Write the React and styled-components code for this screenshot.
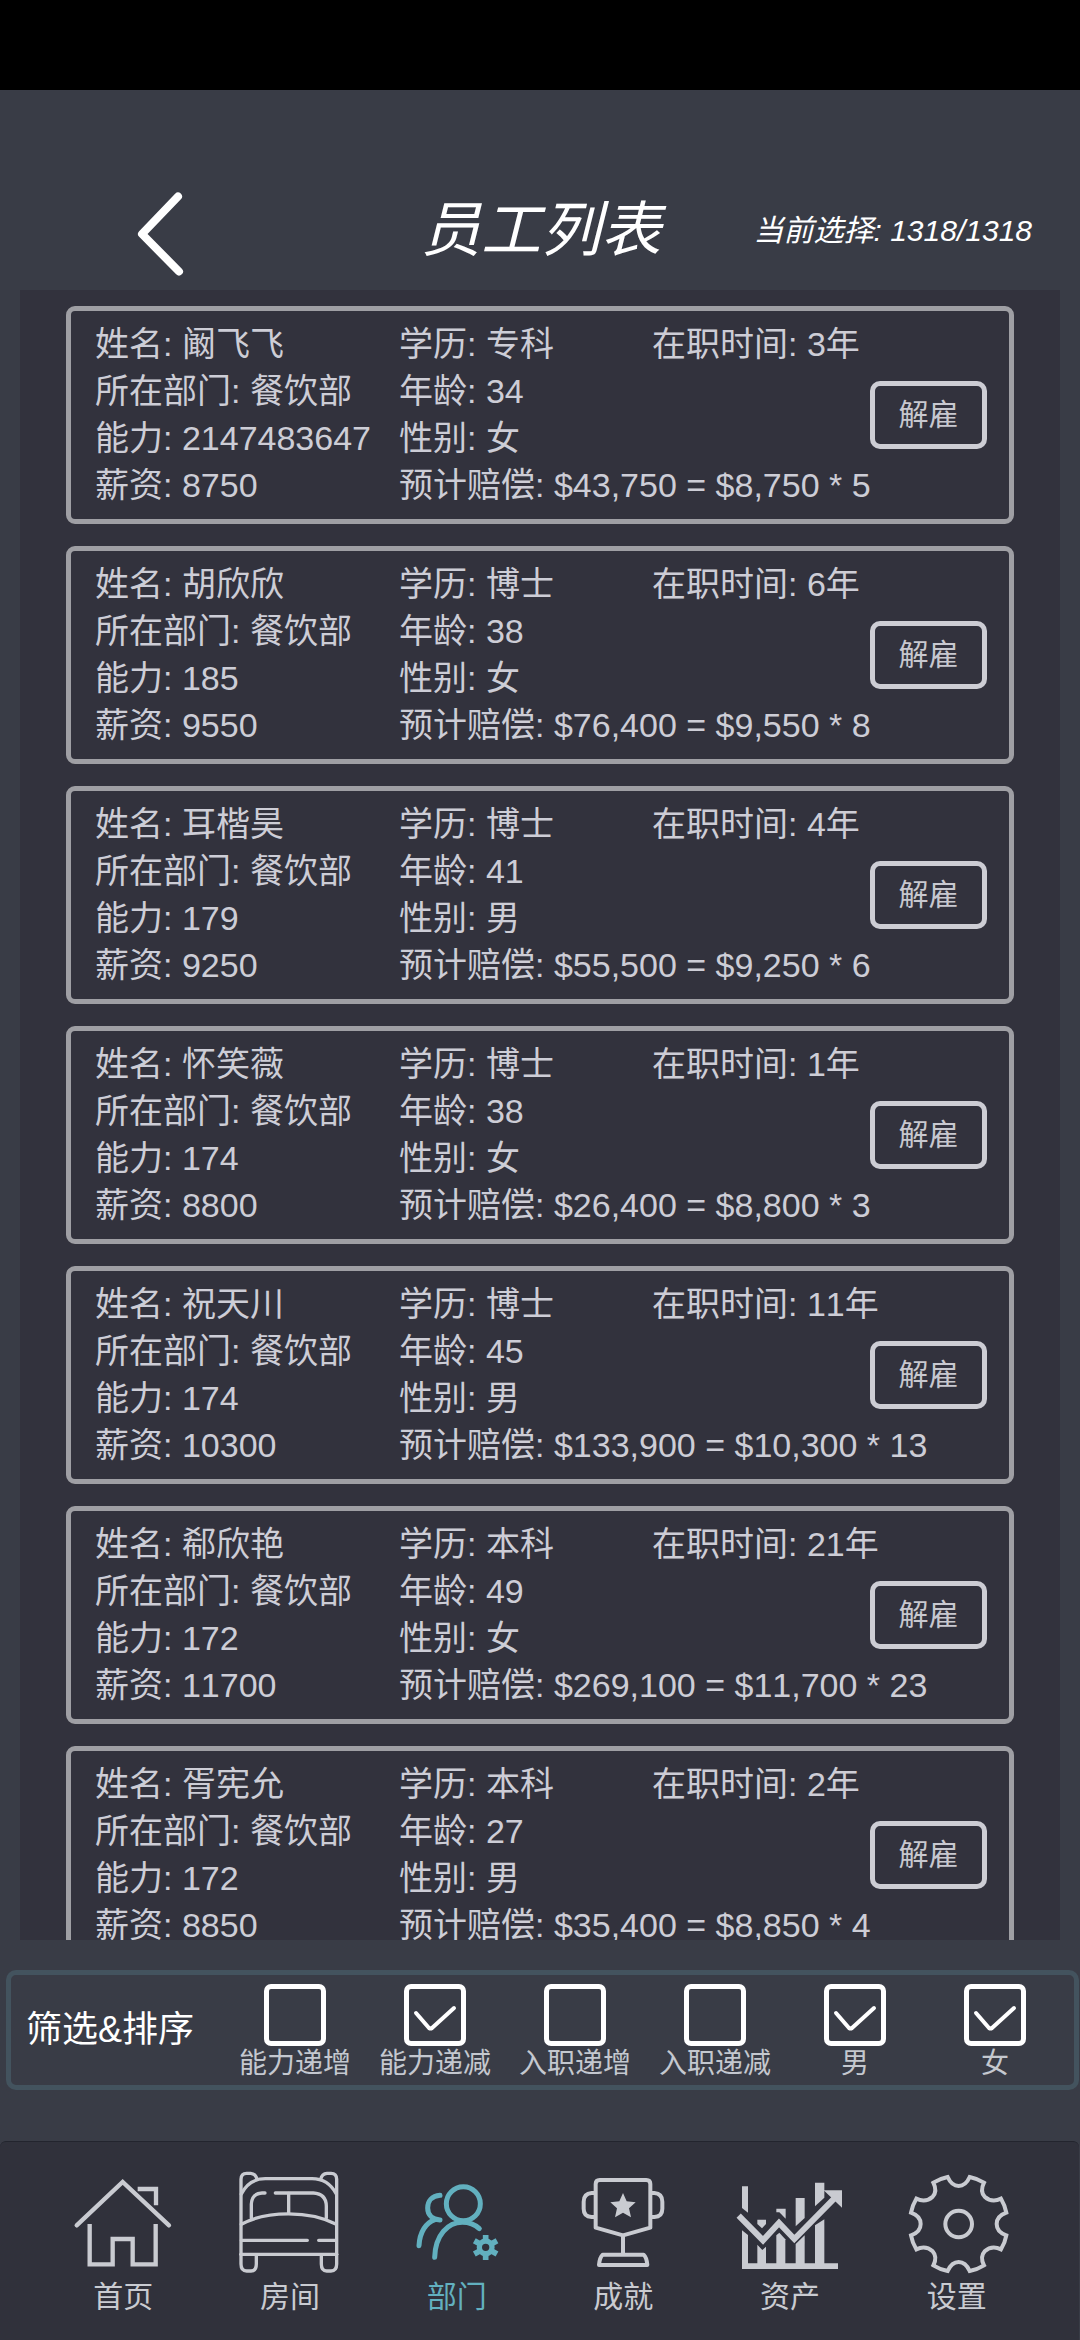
import React, { useState } from "react";
import styled, { createGlobalStyle } from "styled-components";

const GlobalStyle = createGlobalStyle`
  * {
    box-sizing: border-box;
  }
  body {
    margin: 0;
    background: #393c46;
    font-family: "Liberation Sans", "Noto Sans CJK SC", sans-serif;
    font-kerning: none;
  }
  button, input {
    font-family: inherit;
    margin: 0;
  }
`;

const Page = styled.div`
  display: flex;
  flex-direction: column;
  height: 100vh;
  background: #393c46;
`;

const StatusBar = styled.div`
  flex: none;
  height: 90px;
  background: #000;
`;

const Header = styled.header`
  flex: none;
  display: grid;
  grid-template-columns: 1fr auto 1fr;
  align-items: center;
  height: 200px;
  padding: 82px 48px 0 136px;
  color: #fff;
  font-style: italic;
`;

const BackButton = styled.button`
  justify-self: start;
  display: flex;
  padding: 6px 0 0;
  border: none;
  background: none;
  color: #fff;
  cursor: pointer;
`;

const Title = styled.h1`
  margin: 0 86px 0 0;
  font-size: 60px;
  line-height: 80px;
  font-weight: 400;
`;

const Selected = styled.span`
  justify-self: end;
  font-size: 30px;
  line-height: 40px;
  white-space: nowrap;
`;

const List = styled.ul`
  flex: 1;
  min-height: 0;
  display: flex;
  flex-direction: column;
  gap: 22px;
  margin: 0 20px;
  padding: 16px 46px 0;
  overflow: hidden;
  list-style: none;
  background: #32323d;
`;

const Card = styled.li`
  flex: none;
  display: grid;
  grid-template-columns: 304fr 253fr 335fr;
  grid-auto-rows: 47px;
  align-items: center;
  padding: 10px 22px 10px 24px;
  border: 5px solid #9f9fa4;
  border-radius: 9px;
  color: #cdcdd6;
  font-size: 34px;
  line-height: 47px;
  white-space: nowrap;
`;

const Field = styled.span`
  grid-column: ${({ $col }) => $col};
  grid-row: ${({ $row }) => $row};
`;

const FireButton = styled.button`
  grid-column: 3;
  grid-row: 2 / span 2;
  justify-self: end;
  width: 117px;
  height: 68px;
  padding: 0 0 6px;
  border: 5px solid #cdcdd4;
  border-radius: 10px;
  background: none;
  color: #c8c8cf;
  font-size: 30px;
  cursor: pointer;
`;

const FilterBar = styled.section`
  flex: none;
  display: flex;
  align-items: center;
  margin: 30px 1px 51px 6px;
  padding: 9px 9px 3px 15px;
  border: 5px solid #43535e;
  border-radius: 10px;
`;

const FilterTitle = styled.span`
  flex: none;
  width: 199px;
  padding-bottom: 6px;
  color: #fff;
  font-size: 36px;
  line-height: 48px;
`;

const Options = styled.div`
  flex: 1;
  display: grid;
  grid-template-columns: repeat(6, 1fr);
`;

const Option = styled.label`
  display: flex;
  flex-direction: column;
  align-items: center;
  color: #c4c8cf;
  font-size: 28px;
  line-height: 36px;
  white-space: nowrap;
  cursor: pointer;
`;

const CheckWrap = styled.span`
  display: grid;

  > * {
    grid-area: 1 / 1;
  }
`;

const CheckInput = styled.input`
  appearance: none;
  width: 62px;
  height: 62px;
  border: 5px solid #fff;
  border-radius: 7px;
`;

const CheckMark = styled.svg`
  width: 62px;
  height: 62px;
  pointer-events: none;
`;

const Nav = styled.nav`
  flex: none;
  display: grid;
  grid-template-columns: repeat(6, 1fr);
  margin-right: 1px;
  padding: 30px 39px 22px 40px;
  border-top: 1px solid #23252e;
  border-radius: 6px 6px 0 0;
  background: #30313b;
`;

const NavItem = styled.a`
  display: flex;
  flex-direction: column;
  align-items: center;
  gap: 4px;
  color: ${({ $active }) => ($active ? "#62b0bf" : "#c9cbd1")};
  font-size: 30px;
  line-height: 42px;
  text-decoration: none;
`;

const NavIcon = styled.svg`
  width: 100px;
  height: 100px;
  overflow: visible;
  fill: none;
  stroke: currentColor;
`;

const employees = [
  { name: "阚飞飞", dept: "餐饮部", ability: 2147483647, salary: 8750, degree: "专科", age: 34, sex: "女", years: 3, factor: 5 },
  { name: "胡欣欣", dept: "餐饮部", ability: 185, salary: 9550, degree: "博士", age: 38, sex: "女", years: 6, factor: 8 },
  { name: "耳楷昊", dept: "餐饮部", ability: 179, salary: 9250, degree: "博士", age: 41, sex: "男", years: 4, factor: 6 },
  { name: "怀笑薇", dept: "餐饮部", ability: 174, salary: 8800, degree: "博士", age: 38, sex: "女", years: 1, factor: 3 },
  { name: "祝天川", dept: "餐饮部", ability: 174, salary: 10300, degree: "博士", age: 45, sex: "男", years: 11, factor: 13 },
  { name: "郗欣艳", dept: "餐饮部", ability: 172, salary: 11700, degree: "本科", age: 49, sex: "女", years: 21, factor: 23 },
  { name: "胥宪允", dept: "餐饮部", ability: 172, salary: 8850, degree: "本科", age: 27, sex: "男", years: 2, factor: 4 },
];

const filters = [
  { id: "abilityAsc", label: "能力递增", on: false },
  { id: "abilityDesc", label: "能力递减", on: true },
  { id: "joinedAsc", label: "入职递增", on: false },
  { id: "joinedDesc", label: "入职递减", on: false },
  { id: "male", label: "男", on: true },
  { id: "female", label: "女", on: true },
];

const money = (n) => "$" + n.toLocaleString("en-US");

const HomeIcon = () => (
  <NavIcon viewBox="100 156 300 300" strokeWidth="13">
    <path strokeLinecap="round" d="M111 316 L249 186 L388 316" />
    <path d="M294 207 H349 V256" />
    <path d="M150 312 V433 H219 V357 H279 V433 H348 V312" />
  </NavIcon>
);

const BedIcon = () => (
  <NavIcon viewBox="600 156 300 300" strokeWidth="10" strokeLinecap="round" strokeLinejoin="round">
    <path d="M603 403 V178 Q603 160 620 160 H632 Q647 161 651 178" />
    <path d="M890 403 V178 Q890 160 873 160 H861 Q846 161 842 178" />
    <path d="M604 222 C620 190 645 176 676 176 H816 C848 176 873 192 889 222" />
    <path d="M634 294 V252 Q636 220 666 219 H675" />
    <path d="M706 219 H820 Q858 221 859 258 V294" />
    <path d="M746 220 V280" />
    <path d="M604 313 C680 271 810 271 889 313" />
    <path d="M604 361 H802 M836 361 H889" />
    <path d="M603 403 H890" />
    <path d="M603 403 V432 Q603 453 620 453 H633 Q649 453 649 432 V404" />
    <path d="M890 403 V432 Q890 453 873 453 H860 Q844 453 844 432 V404" />
  </NavIcon>
);

const TeamIcon = () => (
  <NavIcon viewBox="80 156 300 300" strokeWidth="15" strokeLinecap="round">
    <circle cx="249" cy="251" r="51" />
    <path d="M163 412 C165 345 203 307 246 307 C267 307 284 314 297 326" />
    <path d="M179 226 C154 228 142 244 142 264 C142 284 155 298 179 300" />
    <path d="M116 377 C118 336 137 308 164 299" />
    <circle cx="316" cy="382" r="19" strokeWidth="16" />
    <path
      strokeLinecap="butt"
      strokeWidth="17"
      d="M316 360 V345 M316 404 V420 M334 371 L350 362 M298 393 L282 402 M334 393 L350 402 M298 371 L282 362"
    />
  </NavIcon>
);

const TrophyIcon = () => (
  <NavIcon viewBox="580 156 300 300" strokeWidth="12" strokeLinejoin="round">
    <path d="M648 323 V192 Q648 180 660 180 H800 Q812 180 812 192 V323 L730 346 Z" />
    <path d="M648 219 H636 Q612 221 612 245 V266 Q612 290 636 291 H648" />
    <path d="M812 219 H824 Q848 221 848 245 V266 Q848 290 824 291 H812" />
    <path d="M730 346 V402" />
    <path d="M669 404 H792 Q801 412 803 435 H658 Q660 412 669 404 Z" />
    <path
      fill="currentColor"
      stroke="none"
      d="M730 219 L741 244 L768 247 L748 265 L754 292 L730 278 L706 292 L712 265 L692 247 L719 244 Z"
    />
  </NavIcon>
);

const AssetsIcon = () => (
  <NavIcon viewBox="120 156 300 300" strokeWidth="18">
    <g fill="currentColor" stroke="none">
      <path d="M126 199 H144 V278 L126 264 Z" />
      <path d="M126 331 L144 345 V430 H414 V447 H126 Z" />
      <path d="M172 299 H198 V312 L186 325 L172 312 Z" />
      <path d="M229 266 H257 V296 L238 277 H229 Z" />
      <path d="M287 234 H314 V294 L287 319 Z" />
      <path d="M345 188 H373 V233 L345 259 Z" />
      <path d="M172 374 L187 390 L198 380 V432 H172 Z" />
      <path d="M229 346 L238 338 L256 358 V432 H229 Z" />
      <path d="M287 372 L314 346 V432 H287 Z" />
      <path d="M345 316 L373 298 V432 H345 Z" />
      <path d="M371 211 H426 V263 Z" />
    </g>
    <path d="M116 287 L189 361 L237 309 L283 357 L409 229" />
  </NavIcon>
);

const GearIcon = () => (
  <NavIcon viewBox="620 156 300 300" strokeWidth="12">
    <circle cx="775" cy="312" r="40" />
    <path d="M742 171 Q754 198 775 198 Q796 198 808 171 Q832 176 851 188 Q838 214 853 230 Q874 249 902 236 Q914 256 918 278 Q889 288 889 312 Q889 336 918 346 Q914 368 902 388 Q874 375 853 394 Q838 410 851 436 Q832 448 808 453 Q796 426 775 426 Q754 426 742 453 Q718 448 699 436 Q712 410 697 394 Q676 375 648 388 Q636 368 632 346 Q661 336 661 312 Q661 288 632 278 Q636 256 648 236 Q676 249 697 230 Q712 214 699 188 Q718 176 742 171 Z" />
  </NavIcon>
);

const tabs = [
  { id: "home", label: "首页", Icon: HomeIcon },
  { id: "rooms", label: "房间", Icon: BedIcon },
  { id: "departments", label: "部门", Icon: TeamIcon },
  { id: "achievements", label: "成就", Icon: TrophyIcon },
  { id: "assets", label: "资产", Icon: AssetsIcon },
  { id: "settings", label: "设置", Icon: GearIcon },
];

const EmployeeCard = ({ item }) => (
  <Card>
    <Field $col="1" $row="1">姓名: {item.name}</Field>
    <Field $col="1" $row="2">所在部门: {item.dept}</Field>
    <Field $col="1" $row="3">能力: {item.ability}</Field>
    <Field $col="1" $row="4">薪资: {item.salary}</Field>
    <Field $col="2" $row="1">学历: {item.degree}</Field>
    <Field $col="2" $row="2">年龄: {item.age}</Field>
    <Field $col="2" $row="3">性别: {item.sex}</Field>
    <Field $col="2 / span 2" $row="4">
      预计赔偿: {money(item.salary * item.factor)} = {money(item.salary)} * {item.factor}
    </Field>
    <Field $col="3" $row="1">在职时间: {item.years}年</Field>
    <FireButton type="button">解雇</FireButton>
  </Card>
);

const App = () => {
  const [checked, setChecked] = useState(
    Object.fromEntries(filters.map((f) => [f.id, f.on]))
  );

  const toggle = (id) => {
    setChecked({ ...checked, [id]: !checked[id] });
  };

  return (
    <Page>
      <GlobalStyle />
      <StatusBar />
      <Header>
        <BackButton type="button" aria-label="返回">
          <svg width="48" height="84" viewBox="0 0 48 84" fill="none" stroke="currentColor" strokeWidth="8" strokeLinecap="round" strokeLinejoin="round">
            <path d="M42 4.500 L6 42 L43 79.500" />
          </svg>
        </BackButton>
        <Title>员工列表</Title>
        <Selected>当前选择: 1318/1318</Selected>
      </Header>

      <List>
        {employees.map((item) => (
          <EmployeeCard item={item} key={item.name} />
        ))}
      </List>

      <FilterBar>
        <FilterTitle>筛选&amp;排序</FilterTitle>
        <Options>
          {filters.map((f) => (
            <Option key={f.id}>
              <CheckWrap>
                <CheckInput type="checkbox" checked={checked[f.id]} onChange={() => toggle(f.id)} />
                {checked[f.id] && (
                  <CheckMark viewBox="0 0 62 62" fill="none" stroke="#fff" strokeWidth="4" strokeLinecap="round" strokeLinejoin="round">
                    <path d="M12 29 L25 44 Q26.500 45 28 44 L50 24" />
                  </CheckMark>
                )}
              </CheckWrap>
              {f.label}
            </Option>
          ))}
        </Options>
      </FilterBar>

      <Nav>
        {tabs.map(({ id, label, Icon }) => (
          <NavItem key={id} href={`#${id}`} $active={id === "departments"}>
            <Icon />
            {label}
          </NavItem>
        ))}
      </Nav>
    </Page>
  );
};

export default App;
